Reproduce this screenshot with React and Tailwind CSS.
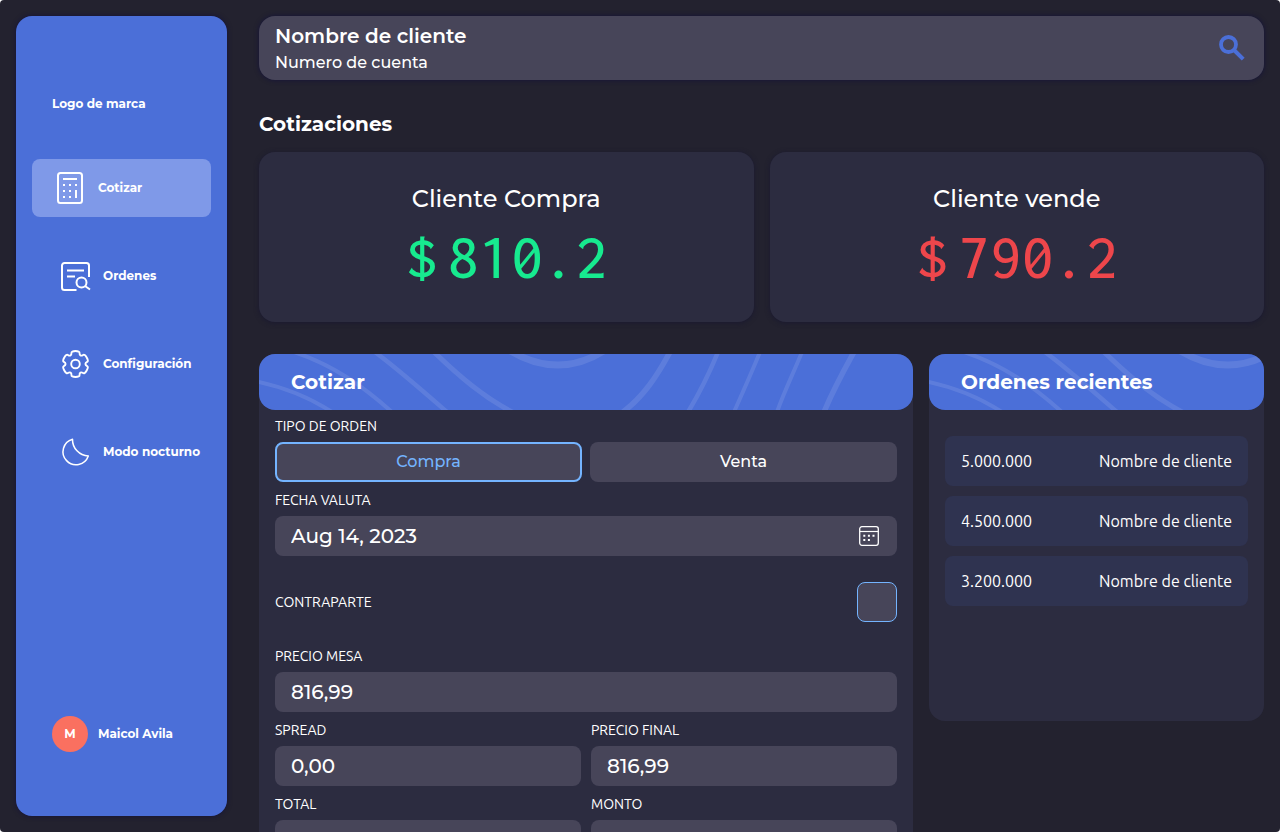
import React from "react";

const uiFont = "font-['Montserrat','Inter',sans-serif]";
const labelFont = "font-['Ubuntu','Noto_Sans',sans-serif]";
const fieldBox =
  "h-10 w-full rounded-lg bg-[#474559] px-4 text-xl font-medium text-white outline-none";

function CalculatorIcon() {
  return (
    <svg viewBox="0 0 36 36" className="size-9" fill="none" stroke="currentColor" strokeWidth="2" aria-hidden="true">
      <rect x="6" y="3" width="24" height="30" rx="2.5" />
      <path d="M11 9h14" />
      <path d="M24 20v8" />
      <path d="M11 15h2M17 15h2M23 15h2M11 21h2M17 21h2M11 27h2M17 27h2" />
    </svg>
  );
}

function OrdersIcon() {
  return (
    <svg viewBox="0 0 36 36" className="size-9" fill="none" stroke="currentColor" strokeWidth="2" aria-hidden="true">
      <path d="M19.500 32H7.500A2.500 2.500 0 0 1 5 29.500V7.500A2.500 2.500 0 0 1 7.500 5h22A2.500 2.500 0 0 1 32 7.500V19" />
      <path d="M10 12.500h17M10 18.500h8" />
      <circle cx="24.500" cy="24.500" r="5" />
      <path d="M28 28l5 3.500" />
    </svg>
  );
}

// Outline of a six-toothed gear: corner points joined by curves through their midpoints.
function gearOutline(cx, cy) {
  const tooth = [[-23, 10], [-18, 13.6], [18, 13.6], [23, 10]];
  const points = [];
  for (let k = 0; k < 6; k += 1) {
    for (const [offset, radius] of tooth) {
      const angle = ((k * 60 - 90 + offset) * Math.PI) / 180;
      points.push([cx + radius * Math.cos(angle), cy + radius * Math.sin(angle)]);
    }
  }
  const mid = (a, b) => `${((a[0] + b[0]) / 2).toFixed(2)} ${((a[1] + b[1]) / 2).toFixed(2)}`;
  const last = points[points.length - 1];
  const curves = points.map(
    (p, i) => `Q${p[0].toFixed(2)} ${p[1].toFixed(2)} ${mid(p, points[(i + 1) % points.length])}`
  );
  return `M${mid(last, points[0])}${curves.join("")}Z`;
}

function GearIcon() {
  return (
    <svg viewBox="0 0 36 36" className="size-9" fill="none" stroke="currentColor" strokeWidth="1.900" aria-hidden="true">
      <path d={gearOutline(18.5, 18)} />
      <circle cx="18.500" cy="18" r="4.300" />
    </svg>
  );
}

function MoonIcon() {
  return (
    <svg viewBox="0 0 36 36" className="size-9" fill="none" stroke="currentColor" strokeWidth="1.500" strokeLinejoin="round" aria-hidden="true">
      <path d="M15.500 5.200A13 13 0 1 0 31.300 22 16.500 16.500 0 0 1 15.500 5.200z" />
    </svg>
  );
}

function SearchIcon() {
  return (
    <svg viewBox="0 0 26 26" className="size-[26px]" fill="none" stroke="currentColor" aria-hidden="true">
      <circle cx="9.500" cy="9.500" r="7.500" strokeWidth="3.800" />
      <path d="M15 15l9.200 9.200" strokeWidth="4" />
    </svg>
  );
}

function CalendarIcon() {
  return (
    <svg viewBox="0 0 20 20" className="size-5" fill="none" stroke="currentColor" aria-hidden="true">
      <rect x="0.700" y="0.700" width="18.600" height="18.600" rx="2.200" strokeWidth="1.300" />
      <path d="M1 5.500h18" strokeWidth="1.200" />
      <path d="M4.300 9.800h2M8.900 9.800h2M13.500 9.800h2M4.300 14h2M8.900 14h2" strokeWidth="2" />
    </svg>
  );
}

function PanelHeader({ title }) {
  return (
    <header className="relative flex h-14 items-center overflow-hidden rounded-2xl bg-[#4b6fd8] px-8">
      <svg
        viewBox="0 0 654 56"
        className="absolute top-0 left-0 h-14 w-[654px] max-w-none"
        fill="none"
        stroke="#ffffff"
        strokeOpacity="0.100"
        strokeWidth="4"
        aria-hidden="true"
      >
        <path d="M-2 27.500C24 33 50 43 73 58" />
        <path d="M35 -2C74 11 104 32 134 59" />
        <path d="M116 -2C140 16 165 38 188 58" strokeWidth="4.500" />
        <path d="M175 -2C200 22 224 43 255 59" strokeWidth="5" />
        <path d="M250 -4C282 16 316 16 346 -4" strokeWidth="7" />
        <path d="M411 -2C398 22 385 42 364 58" strokeWidth="5.500" />
        <path d="M459 -2C450 20 440 40 429 58" strokeWidth="4.500" />
        <path d="M501 -2C492 20 483 40 475 58" />
        <path d="M543 -2C534 20 525 38 518 58" />
        <path d="M595 -2C585 16 575 34 565 58" strokeWidth="5.500" />
      </svg>
      <h2 className="relative text-xl font-bold">{title}</h2>
    </header>
  );
}

function NavItem({ icon, label, active }) {
  return (
    <a
      href="#"
      aria-current={active ? "page" : undefined}
      className={
        active
          ? "flex h-[58px] items-center gap-[10px] rounded-lg bg-[#7f99e8] pl-5 whitespace-nowrap"
          : "flex h-[58px] items-center gap-[10px] rounded-lg pl-[25px] whitespace-nowrap"
      }
    >
      {icon}
      {label}
    </a>
  );
}

function Quote({ title, amount, color }) {
  return (
    <article className="flex h-[170px] flex-col items-center rounded-2xl bg-[#2c2c40] pt-7 shadow-[0_1px_5px_#1a1930]">
      <h2 className="text-2xl leading-[38px] font-medium">{title}</h2>
      <p className={`flex gap-[10px] font-['Inconsolata','DejaVu_Sans_Mono',monospace] text-[64px] leading-[78px] font-[550] ${color}`}>
        <span>$</span>
        <span>{amount}</span>
      </p>
    </article>
  );
}

function Field({ id, label, value }) {
  return (
    <div className="min-w-0 flex-1">
      <label htmlFor={id} className={`flex h-8 items-center text-sm ${labelFont}`}>
        {label}
      </label>
      <input id={id} type="text" defaultValue={value} className={fieldBox} />
    </div>
  );
}

const orders = [
  { amount: "5.000.000", client: "Nombre de cliente" },
  { amount: "4.500.000", client: "Nombre de cliente" },
  { amount: "3.200.000", client: "Nombre de cliente" },
];

export default function App() {
  return (
    <div className={`flex h-screen overflow-hidden rounded bg-[#23222f] text-white ${uiFont}`}>
      <aside className="my-4 ml-4 flex w-[211px] shrink-0 flex-col rounded-2xl bg-[#4b6fd8] px-4 pb-16 text-xs font-bold shadow-[0_0_5px_#14123a]">
        <p className="mt-[78px] ml-5 leading-5">Logo de marca</p>
        <nav className="mt-[45px] flex flex-col gap-[30px]">
          <NavItem icon={<CalculatorIcon />} label="Cotizar" active />
          <NavItem icon={<OrdersIcon />} label="Ordenes" />
          <NavItem icon={<GearIcon />} label="Configuración" />
          <NavItem icon={<MoonIcon />} label="Modo nocturno" />
        </nav>
        <div className="mt-auto ml-5 flex items-center gap-[10px]">
          <span className="flex size-9 items-center justify-center rounded-full bg-[#fa7060]">M</span>
          <span>Maicol Avila</span>
        </div>
      </aside>

      <main className="min-w-0 flex-1 overflow-y-auto py-4 pr-4 pl-8 [scrollbar-width:none]">
        <header className="flex h-16 items-center justify-between rounded-2xl bg-[#474559] pr-[19px] pl-4 shadow-[0_0_5px_#14123a]">
          <div className="pt-[2px]">
            <p className="text-xl leading-7 font-semibold">Nombre de cliente</p>
            <p className="text-base leading-[26px] font-medium">Numero de cuenta</p>
          </div>
          <button type="button" aria-label="Buscar" className="text-[#4b6fd8]">
            <SearchIcon />
          </button>
        </header>

        <h1 className="mt-7 text-xl leading-8 font-bold">Cotizaciones</h1>
        <section className="mt-3 grid grid-cols-2 gap-4">
          <Quote title="Cliente Compra" amount="810.2" color="text-[#17ea8f]" />
          <Quote title="Cliente vende" amount="790.2" color="text-[#ee464b]" />
        </section>

        <div className="mt-8 flex items-start gap-4">
          <section className="min-w-0 flex-1 rounded-2xl bg-[#2c2c40]">
            <PanelHeader title="Cotizar" />
            <form className="flex flex-col gap-[2px] px-4 pb-6">
              <fieldset>
                <legend className={`flex h-8 items-center text-sm ${labelFont}`}>TIPO DE ORDEN</legend>
                <div className="grid grid-cols-2 gap-2">
                  <button type="button" aria-pressed="true" className="h-10 rounded-lg border-2 border-[#74b4ff] bg-[#474559] font-medium text-[#74b4ff]">
                    Compra
                  </button>
                  <button type="button" aria-pressed="false" className="h-10 rounded-lg bg-[#474559] font-medium">
                    Venta
                  </button>
                </div>
              </fieldset>
              <div>
                <label htmlFor="fecha" className={`flex h-8 items-center text-sm ${labelFont}`}>
                  FECHA VALUTA
                </label>
                <div className="flex h-10 items-center rounded-lg bg-[#474559] pr-[18px] pl-4">
                  <input id="fecha" type="text" defaultValue="Aug 14, 2023" className="min-w-0 flex-1 bg-transparent text-xl font-medium outline-none" />
                  <button type="button" aria-label="Abrir calendario">
                    <CalendarIcon />
                  </button>
                </div>
              </div>
              <div className="mt-6 mb-4 flex items-center justify-between">
                <label htmlFor="contraparte" className={`text-sm ${labelFont}`}>
                  CONTRAPARTE
                </label>
                <input id="contraparte" type="checkbox" className="size-10 appearance-none rounded-lg border border-[#74b4ff] bg-[#474559] checked:bg-[#74b4ff]" />
              </div>
              <Field id="mesa" label="PRECIO MESA" value="816,99" />
              <div className="flex gap-[10px]">
                <Field id="spread" label="SPREAD" value="0,00" />
                <Field id="final" label="PRECIO FINAL" value="816,99" />
              </div>
              <div className="flex gap-[10px]">
                <Field id="total" label="TOTAL" value="" />
                <Field id="monto" label="MONTO" value="" />
              </div>
            </form>
          </section>

          <section className="min-h-[367px] w-1/3 rounded-2xl bg-[#2c2c40]">
            <PanelHeader title="Ordenes recientes" />
            <ul className={`mt-[26px] flex flex-col gap-[10px] px-4 pb-4 ${labelFont}`}>
              {orders.map((order) => (
                <li key={order.amount} className="flex h-[50px] items-center justify-between rounded-lg bg-[#2f3350] px-4">
                  <span>{order.amount}</span>
                  <span>{order.client}</span>
                </li>
              ))}
            </ul>
          </section>
        </div>
      </main>
    </div>
  );
}
